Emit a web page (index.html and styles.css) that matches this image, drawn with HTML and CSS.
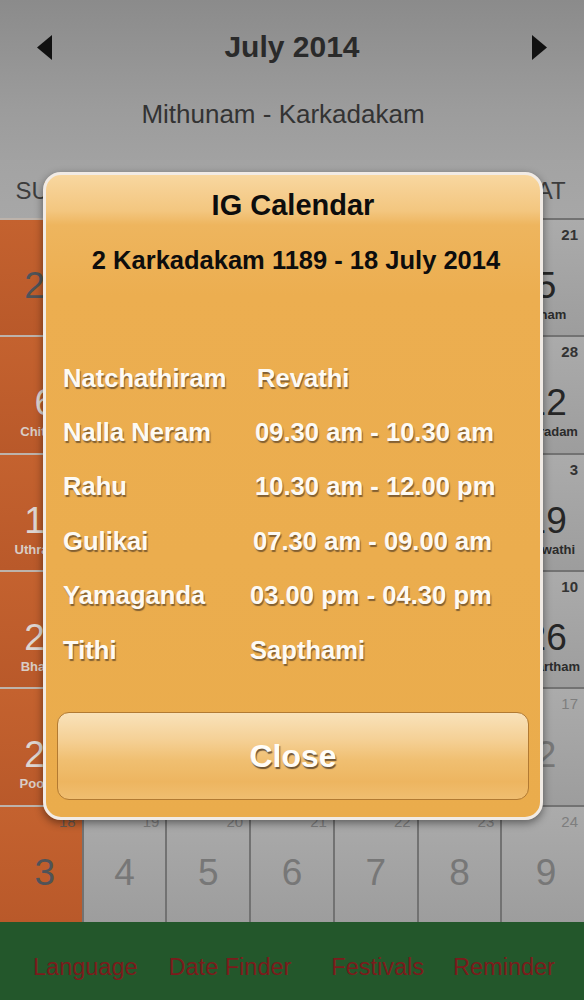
FILE: index.html
```html
<!DOCTYPE html>
<html>
<head>
<meta charset="utf-8">
<link rel="stylesheet" href="styles.css">
</head>
<body>
<div class="screen">
  <header class="top">
    <div class="month-bar">
      <svg class="arrow" viewBox="0 0 15 25" width="15" height="25"><polygon points="15,0 15,25 0,12.5"/></svg>
      <h1 class="month">July 2014</h1>
      <svg class="arrow" viewBox="0 0 15 25" width="15" height="25"><polygon points="0,0 0,25 15,12.5"/></svg>
    </div>
    <div class="malmonth">Mithunam - Karkadakam</div>
  </header>

  <div class="weekdays">
    <span>SUN</span><span></span><span></span><span></span><span></span><span></span><span>SAT</span>
  </div>

  <div class="grid">
    <div class="cell sun out"><span class="mal">15</span><span class="day">29</span><span class="star"></span></div>
    <div class="cell"></div>
    <div class="cell"></div>
    <div class="cell"></div>
    <div class="cell"></div>
    <div class="cell"></div>
    <div class="cell sat"><span class="mal">21</span><span class="day">5</span><span class="star">Atham</span></div>

    <div class="cell sun"><span class="mal">22</span><span class="day">6</span><span class="star">Chithira</span></div>
    <div class="cell"></div>
    <div class="cell"></div>
    <div class="cell"></div>
    <div class="cell"></div>
    <div class="cell"></div>
    <div class="cell sat"><span class="mal">28</span><span class="day">12</span><span class="star">Pooradam</span></div>

    <div class="cell sun"><span class="mal">29</span><span class="day">13</span><span class="star">Uthradam</span></div>
    <div class="cell"></div>
    <div class="cell"></div>
    <div class="cell"></div>
    <div class="cell"></div>
    <div class="cell"></div>
    <div class="cell sat"><span class="mal">3</span><span class="day">19</span><span class="star">Ashwathi</span></div>

    <div class="cell sun"><span class="mal">4</span><span class="day">20</span><span class="star">Bharani</span></div>
    <div class="cell"></div>
    <div class="cell"></div>
    <div class="cell"></div>
    <div class="cell"></div>
    <div class="cell"></div>
    <div class="cell sat"><span class="mal">10</span><span class="day">26</span><span class="star">Punartham</span></div>

    <div class="cell sun"><span class="mal">11</span><span class="day">27</span><span class="star">Pooyam</span></div>
    <div class="cell"></div>
    <div class="cell"></div>
    <div class="cell"></div>
    <div class="cell"></div>
    <div class="cell"></div>
    <div class="cell sat out"><span class="mal">17</span><span class="day">2</span><span class="star"></span></div>

    <div class="cell sun out"><span class="mal">18</span><span class="day">3</span><span class="star"></span></div>
    <div class="cell out"><span class="mal">19</span><span class="day">4</span><span class="star"></span></div>
    <div class="cell out"><span class="mal">20</span><span class="day">5</span><span class="star"></span></div>
    <div class="cell out"><span class="mal">21</span><span class="day">6</span><span class="star"></span></div>
    <div class="cell out"><span class="mal">22</span><span class="day">7</span><span class="star"></span></div>
    <div class="cell out"><span class="mal">23</span><span class="day">8</span><span class="star"></span></div>
    <div class="cell sat out"><span class="mal">24</span><span class="day">9</span><span class="star"></span></div>
  </div>

  <nav class="tabs">
    <span>Language</span>
    <span>Date Finder</span>
    <span>Festivals</span>
    <span>Reminder</span>
  </nav>

  <div class="dialog">
    <div class="dlg-title">IG Calendar</div>
    <div class="dlg-date">2 Karkadakam 1189 - 18 July 2014</div>
    <div class="info">
      <span class="lbl">Natchathiram</span><span class="val first">Revathi</span>
      <span class="lbl">Nalla Neram</span><span class="val">09.30 am - 10.30 am</span>
      <span class="lbl">Rahu</span><span class="val">10.30 am - 12.00 pm</span>
      <span class="lbl">Gulikai</span><span class="val mid">07.30 am - 09.00 am</span>
      <span class="lbl">Yamaganda</span><span class="val shift">03.00 pm - 04.30 pm</span>
      <span class="lbl">Tithi</span><span class="val shift">Sapthami</span>
    </div>
    <div class="close-btn">Close</div>
  </div>
</div>
</body>
</html>
```

FILE: styles.css
```css
* { box-sizing: border-box; }

html, body {
  margin: 0;
  padding: 0;
}

body {
  font-family: "Liberation Sans", Arial, sans-serif;
  background: #999;
}

.screen {
  position: relative;
  width: 584px;
  height: 1000px;
  overflow: hidden;
  display: flex;
  flex-direction: column;
  background: linear-gradient(to bottom, #8b8b8b 0%, #9c9c9c 110px, #a6a6a6 200px);
}

.top {
  height: 160px;
  display: flex;
  flex-direction: column;
}

.month-bar {
  height: 94px;
  display: flex;
  align-items: center;
  justify-content: space-between;
  padding: 0 37px 0 37px;
}

.arrow {
  display: block;
  fill: #111;
}

.month {
  margin: 0;
  font-size: 30px;
  font-weight: bold;
  color: #2a2a2a;
  line-height: 40px;
}

.malmonth {
  height: 40px;
  line-height: 40px;
  text-align: center;
  font-size: 26px;
  color: #333;
  padding-right: 18px;
}

.weekdays {
  height: 58px;
  display: grid;
  grid-template-columns: repeat(7, 1fr);
  column-gap: 2px;
  align-items: center;
  background: linear-gradient(to bottom, #a3a3a3, #a7a7a7);
}

.weekdays span {
  text-align: center;
  font-size: 24px;
  color: #3c3c3c;
  padding-top: 4px;
}

.grid {
  height: 704px;
  display: grid;
  grid-template-columns: repeat(7, 1fr);
  grid-template-rows: repeat(6, 1fr);
  gap: 2px;
  padding-top: 2px;
  background: #727272;
}

.cell {
  display: flex;
  flex-direction: column;
  align-items: center;
  padding: 6px 6px 0 6px;
  background: linear-gradient(to bottom, #ababab, #9d9d9d);
  color: #2b2b2b;
  overflow: hidden;
}

.cell .mal {
  align-self: flex-end;
  font-size: 15px;
  line-height: 18px;
  font-weight: bold;
  color: #333;
  height: 18px;
}

.cell .day {
  margin-top: 22px;
  font-size: 37px;
  line-height: 40px;
  color: #262626;
}

.cell .star {
  font-size: 13px;
  line-height: 18px;
  font-weight: bold;
  color: #2b2b2b;
  white-space: nowrap;
}

.cell.out .mal { color: #7e7e7e; font-weight: normal; }
.cell.out .day { color: #777; }

.cell.sat { padding-left: 12px; }

.cell.sun {
  padding-left: 14px;
  background: linear-gradient(to bottom, #c4622f, #b9592a);
  box-shadow: 0 -2px 0 #bdb3ab;
}

.cell.sun .day { color: #ddd6d2; }
.cell.sun .star { color: #d9cdc6; }
.cell.sun .mal { color: #ddd6d2; }
.cell.sun.out .day { color: #4f5358; }
.cell.sun.out .mal { color: #6a5a50; }

.tabs {
  flex: 1;
  display: flex;
  padding: 31px 0 0 33px;
  background: #23572b;
}

.tabs span {
  font-size: 23.5px;
  line-height: 28px;
  color: #7b1b1c;
}

.tabs span + span { margin-left: 31px; }
.tabs span:nth-child(3) { margin-left: 40px; }
.tabs span:nth-child(4) { margin-left: 29px; }

.dialog {
  position: absolute;
  left: 43px;
  top: 172px;
  width: 500px;
  height: 648px;
  border: 3px solid #f1ebe5;
  border-radius: 18px;
  padding: 12px 11px 17px 11px;
  display: flex;
  flex-direction: column;
  background: linear-gradient(to bottom, #f8d7a0 0px, #f3c67f 36px, #eeb55e 50px, #ecae50 120px, #eaac4c 100%);
  box-shadow: 0 3px 8px rgba(0, 0, 0, 0.45);
}

.dlg-title {
  text-align: center;
  font-size: 29px;
  line-height: 36px;
  font-weight: bold;
  color: #0d0d0d;
}

.dlg-date {
  margin-top: 22px;
  text-align: center;
  font-size: 25.5px;
  line-height: 30px;
  font-weight: bold;
  color: #0d0d0d;
  padding-left: 6px;
}

.info {
  margin-top: 76px;
  padding-left: 6px;
  display: grid;
  grid-template-columns: 192px 1fr;
  grid-auto-rows: 54.4px;
  align-items: center;
}

.info span {
  font-size: 25.6px;
  font-weight: bold;
  color: #fdfaf4;
  text-shadow: 1px 2px 1px rgba(95, 70, 40, 0.75);
  white-space: nowrap;
}

.info .val.first { margin-left: 2px; }
.info .val.mid { margin-left: -2px; }
.info .val.shift { margin-left: -5px; }

.close-btn {
  margin-top: 35px;
  height: 88px;
  border: 1.5px solid #b27a32;
  border-radius: 12px;
  background: linear-gradient(to bottom, #f9e2ba 0%, #f5d197 30%, #f0bf71 55%, #edb560 80%, #f0be70 100%);
  display: flex;
  align-items: center;
  justify-content: center;
  font-size: 32px;
  font-weight: bold;
  color: #fffdf8;
  text-shadow: 1px 2px 1px rgba(80, 60, 40, 0.8);
}
```
